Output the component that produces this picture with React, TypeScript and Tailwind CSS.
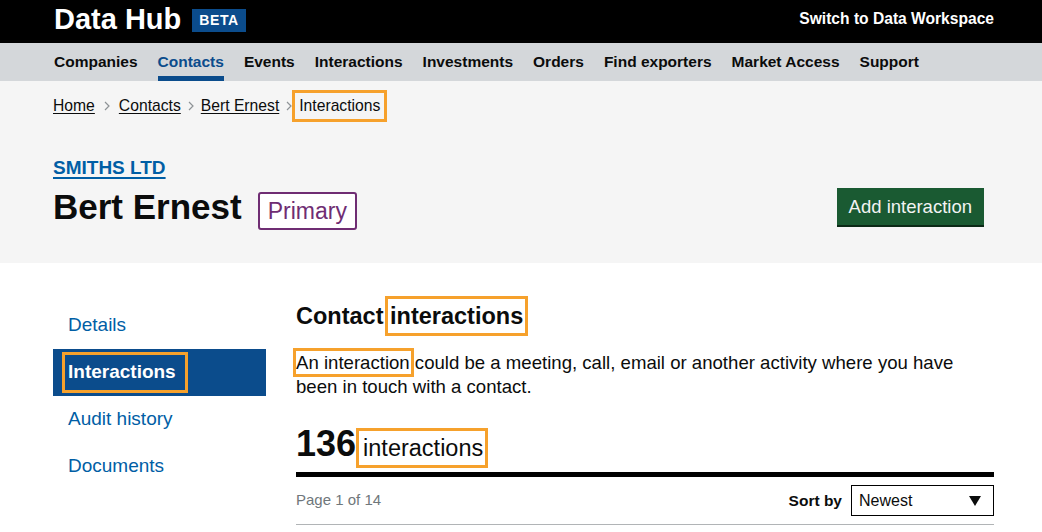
import React from "react";

const navItems = [
  "Companies",
  "Contacts",
  "Events",
  "Interactions",
  "Investments",
  "Orders",
  "Find exporters",
  "Market Access",
  "Support",
];

const sideItems = ["Details", "Interactions", "Audit history", "Documents"];

// orange annotation box drawn over a span of text
function Mark({ children, box }: { children: React.ReactNode; box: string }) {
  return (
    <span className="relative">
      {children}
      <span className={`pointer-events-none absolute border-[3px] border-[#f6a12c] ${box}`} />
    </span>
  );
}

function Chevron({ wide }: { wide?: boolean }) {
  return (
    <svg width="6" height="10" viewBox="0 0 6 10" className={`shrink-0 ${wide ? "mx-[9px]" : "mx-[7px]"}`}>
      <path d="M1 1l4 4-4 4" fill="none" stroke="#8e9396" strokeWidth="1.2" />
    </svg>
  );
}

export default function App() {
  return (
    <div className="min-h-[532px] bg-white font-['Liberation_Sans',Arial,sans-serif] text-[#0b0c0c]">
      {/* Top bar */}
      <header className="bg-black">
        <div className="flex h-[43px] items-center justify-between pb-[4px] pl-[54px] pr-[48px]">
          <div className="flex items-center">
            <span className="text-[29px] font-bold leading-none text-white">Data Hub</span>
            <span className="ml-[11px] mt-[2px] flex h-[23px] items-center bg-[#0b4c8c] px-[7px] text-[14px] font-bold tracking-[0.6px] text-white">
              BETA
            </span>
          </div>
          <span className="mb-[2px] text-[15.6px] font-bold text-white">Switch to Data Workspace</span>
        </div>
      </header>

      {/* Main navigation */}
      <nav className="bg-[#d4d7da]">
        <ul className="flex h-[38px] gap-[20px] pl-[54px]">
          {navItems.map((item) => (
            <li
              key={item}
              className={`flex h-full items-center border-b-[5px] pt-[5px] text-[15.5px] font-bold ${
                item === "Contacts" ? "border-[#0b4c8c] text-[#0b4c8c]" : "border-transparent text-[#0b0c0c]"
              }`}
            >
              {item}
            </li>
          ))}
        </ul>
      </nav>

      {/* Page heading */}
      <section className="bg-[#f5f5f5] pb-[36px] pl-[53px] pr-[48px] pt-[15px]">
        <div className="flex items-center text-[15.7px] leading-[20px]">
          <a className="underline underline-offset-2">Home</a>
          <Chevron wide />
          <a className="underline underline-offset-2">Contacts</a>
          <Chevron />
          <a className="underline underline-offset-2">Bert Ernest</a>
          <Chevron />
          <Mark box="-inset-x-[7px] -inset-y-[6px]">Interactions</Mark>
        </div>

        <div className="mt-[40px] flex items-end justify-between">
          <div>
            <a className="text-[19px] font-bold uppercase leading-[24px] text-[#005ea5] underline decoration-2 underline-offset-[3px]">
              Smiths Ltd
            </a>
            <div className="mt-[6px] flex h-[40px] items-start">
              <h1 className="text-[35px] font-bold leading-[40px]">Bert Ernest</h1>
              <span className="ml-[16px] mt-[5px] flex h-[38px] items-center rounded-[3px] border-2 border-[#6f2d73] bg-white px-[8px] text-[23px] text-[#6f2d73]">
                Primary
              </span>
            </div>
          </div>
          <button className="mb-[2px] mr-[10px] h-[37px] bg-[#1a5a32] px-[12px] text-[18.5px] text-[#f3f3f3] shadow-[0_2px_0_#0b2916]">
            Add interaction
          </button>
        </div>
      </section>

      {/* Body */}
      <section className="flex gap-[30px] pl-[53px] pr-[48px] pt-[38px]">
        <aside className="mt-[1px] w-[213px] shrink-0">
          <ul>
            {sideItems.map((item) => (
              <li
                key={item}
                className={`flex h-[47px] items-center px-[15px] text-[19px] ${
                  item === "Interactions" ? "bg-[#0b4c8c] font-bold text-white" : "text-[#005ea5]"
                }`}
              >
                {item === "Interactions" ? (
                  <Mark box="-left-[6px] -right-[12px] -inset-y-[6px]">{item}</Mark>
                ) : (
                  item
                )}
              </li>
            ))}
          </ul>
        </aside>

        <main className="min-w-0 flex-1">
          <h2 className="text-[23.5px] font-bold leading-[30px]">
            Contact <Mark box="-inset-x-[5px] -inset-y-[7px]">interactions</Mark>
          </h2>
          <p className="mt-[20px] text-[18.6px] leading-[24px]">
            <Mark box="-left-[3px] -right-[4px] -inset-y-[4px]">An interaction</Mark> could be a meeting, call,
            email or another activity where you have been in touch with a contact.
          </p>

          <div className="mt-[25px] flex items-baseline leading-[40px]">
            <span className="text-[36px] font-bold">136</span>
            <span className="ml-[7px] text-[23.5px]">
              <Mark box="-left-[7px] -right-[5px] -inset-y-[7px]">interactions</Mark>
            </span>
          </div>
          <div className="mt-[4px] h-[5px] bg-black" />

          <div className="flex items-center justify-between border-b border-[#b1b4b6] py-[8px]">
            <span className="text-[15px] text-[#6f777b]">Page 1 of 14</span>
            <div className="flex items-center gap-[9px]">
              <span className="text-[15.5px] font-bold">Sort by</span>
              <div className="flex h-[31px] w-[143px] items-center justify-between border border-black bg-white pl-[7px] pr-[12px] text-[16px]">
                <span>Newest</span>
                <svg width="12" height="10" viewBox="0 0 12 10">
                  <path d="M0 0h12L6 10z" fill="#0b0c0c" />
                </svg>
              </div>
            </div>
          </div>
        </main>
      </section>
    </div>
  );
}
